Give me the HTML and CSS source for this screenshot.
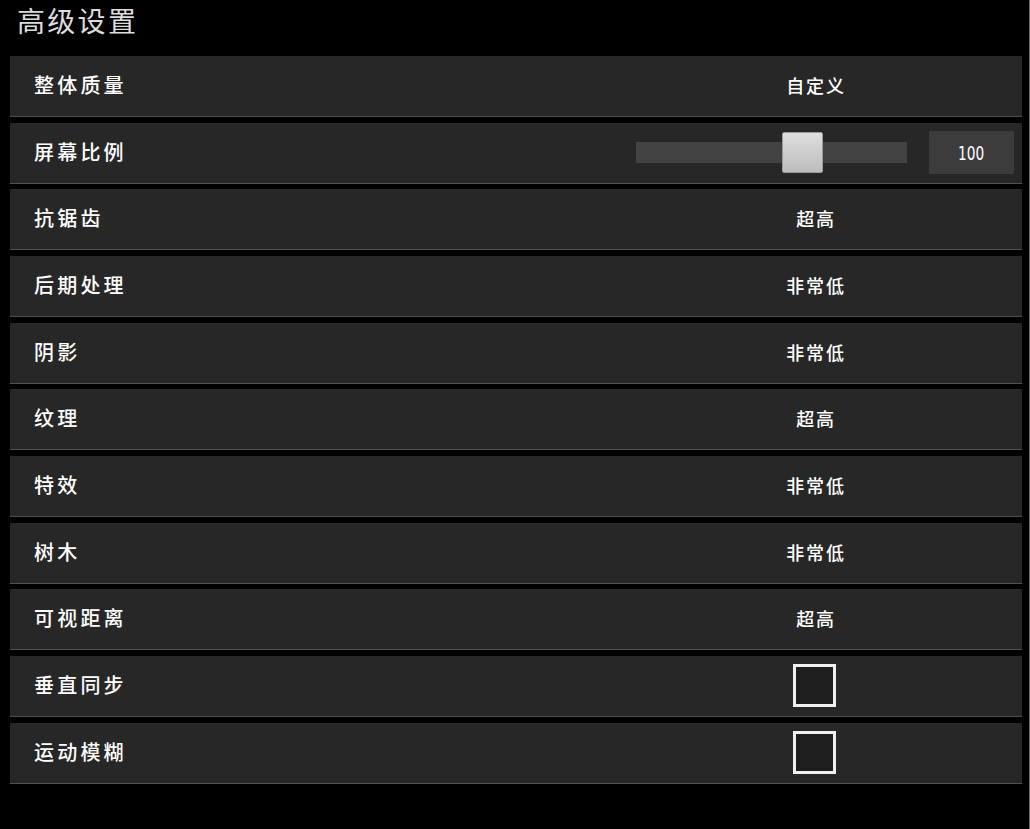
FILE: index.html
```html
<!DOCTYPE html>
<html>
<head>
    <meta charset="utf-8" />
    <title>高级设置</title>
    <link rel="stylesheet" href="styles.css">
</head>
<body>
    <div id="oldal">
        <div class="cim">高级设置</div>

        <div id="lista">
            <div class="sor">
                <span class="nev">整体质量</span>
                <span class="ertek">自定义</span>
            </div>
            <div class="sor">
                <span class="nev">屏幕比例</span>
                <div class="csuszka">
                    <div class="sav">
                        <div class="fogo"></div>
                    </div>
                    <div class="szam"><span>100</span></div>
                </div>
            </div>
            <div class="sor">
                <span class="nev">抗锯齿</span>
                <span class="ertek">超高</span>
            </div>
            <div class="sor">
                <span class="nev">后期处理</span>
                <span class="ertek">非常低</span>
            </div>
            <div class="sor">
                <span class="nev">阴影</span>
                <span class="ertek">非常低</span>
            </div>
            <div class="sor">
                <span class="nev">纹理</span>
                <span class="ertek">超高</span>
            </div>
            <div class="sor">
                <span class="nev">特效</span>
                <span class="ertek">非常低</span>
            </div>
            <div class="sor">
                <span class="nev">树木</span>
                <span class="ertek">非常低</span>
            </div>
            <div class="sor">
                <span class="nev">可视距离</span>
                <span class="ertek">超高</span>
            </div>
            <div class="sor">
                <span class="nev">垂直同步</span>
                <span class="ertek"><span class="doboz"></span></span>
            </div>
            <div class="sor">
                <span class="nev">运动模糊</span>
                <span class="ertek"><span class="doboz"></span></span>
            </div>
        </div>
    </div>
</body>
</html>
```

FILE: styles.css
```css
* {
    font-family: "Noto Sans CJK SC", "DejaVu Sans", sans-serif;
    box-sizing: border-box;
}

body {
    margin: 0;
    background-color: #000;
}

#oldal {
    width: 1030px;
    height: 829px;
    border-right: 1px solid #6a6a6a;
}

.cim {
    color: #dcdcdc;
    font-size: 28px;
    line-height: 40px;
    letter-spacing: 2.3px;
    padding-left: 17px;
    margin-bottom: 16px;
}

#lista {
    display: flex;
    flex-direction: column;
    gap: 5.67px;
    padding: 0 7px 0 10px;
}

.sor {
    display: flex;
    align-items: center;
    height: 61px;
    background-color: #272727;
    border-bottom: 1px solid #525252;
    padding-left: 24px;
}

.nev {
    flex: 1;
    color: #fff;
    font-size: 20px;
    font-weight: 500;
    letter-spacing: 3.2px;
    padding-bottom: 3px;
}

.ertek {
    width: 200px;
    margin-right: 106px;
    text-align: center;
    color: #fff;
    font-size: 18px;
    font-weight: 500;
    letter-spacing: 1.8px;
    padding-bottom: 2px;
    display: flex;
    justify-content: center;
}

.doboz {
    display: block;
    width: 43px;
    height: 43px;
    border: 3px solid #f0f0f0;
    background-color: #1e1e1e;
    margin-bottom: -2px;
    margin-right: 4px;
}

.csuszka {
    display: flex;
    align-items: center;
    gap: 22px;
    margin-right: 8px;
}

.sav {
    position: relative;
    width: 271px;
    height: 21px;
    background-color: #434343;
}

.fogo {
    position: absolute;
    left: 146px;
    top: -10px;
    width: 41px;
    height: 41px;
    border-radius: 2px;
    border: 1px solid #9a9a9a;
    background: linear-gradient(#dedede, #bdbdbd);
}

.szam {
    width: 85px;
    height: 43px;
    line-height: 41px;
    background-color: #3c3c3c;
    color: #fff;
    text-align: center;
    font-size: 19px;
}

.szam span {
    display: inline-block;
    font-family: "DejaVu Sans", sans-serif;
    transform: scaleX(0.72);
}
```
